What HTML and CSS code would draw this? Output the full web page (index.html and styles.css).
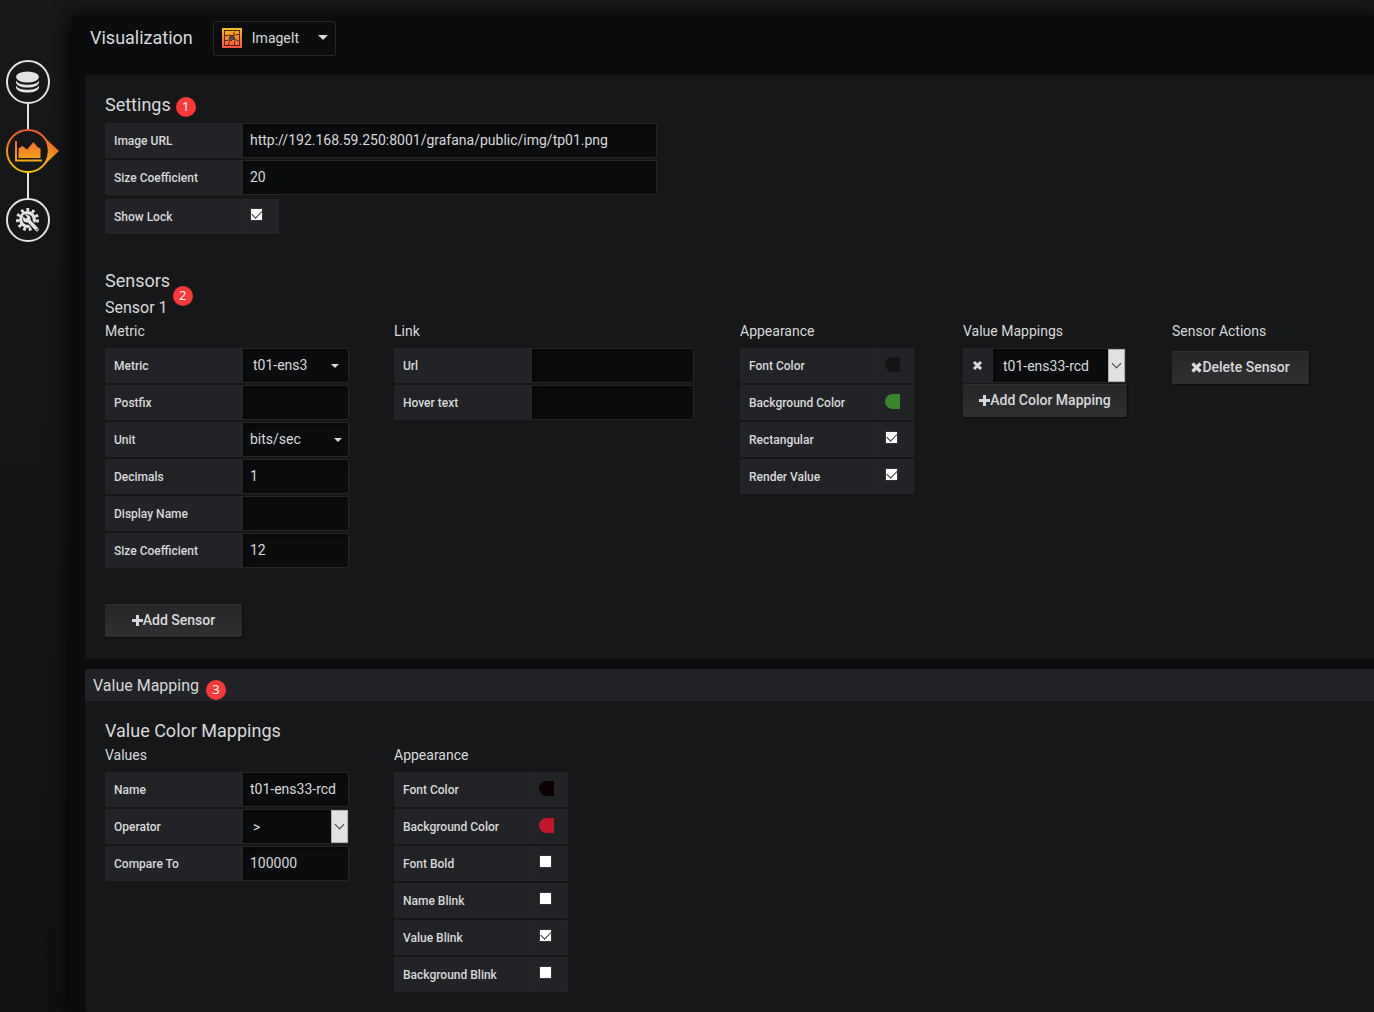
FILE: index.html
```html
<!DOCTYPE html>
<html lang="en">
<head>
    <meta charset="UTF-8">
    <meta name="viewport" content="width=device-width, initial-scale=1.0">
    <title>Visualization</title>
    <link rel="stylesheet" href="styles.css">
</head>
<body>

<nav class="steps">
    <a class="step" href="#queries" aria-label="Queries">
        <svg width="44" height="44" viewBox="0 0 44 44">
            <circle cx="22" cy="22" r="21" fill="none" stroke="#e3e3e3" stroke-width="2"/>
            <g fill="#e3e3e3">
                <ellipse cx="21.500" cy="17" rx="11.500" ry="5.500"/>
                <path d="M10 20.500c1.500 3 6 4.200 11.500 4.200s10-1.200 11.500-4.200v2.200c-1 3.200-5.800 4.800-11.500 4.800s-10.500-1.600-11.500-4.800z"/>
                <path d="M10 25.500c1.500 3 6 4.200 11.500 4.200s10-1.200 11.500-4.200v2.200c-1 3.200-5.800 4.800-11.500 4.800s-10.500-1.600-11.500-4.800z"/>
            </g>
        </svg>
    </a>
    <a class="step active" href="#visualization" aria-label="Visualization">
        <svg width="54" height="44" viewBox="0 0 54 44">
            <defs>
                <linearGradient id="flame" gradientUnits="userSpaceOnUse" x1="0" y1="0" x2="0" y2="44">
                    <stop offset="0" stop-color="#f05a28"/>
                    <stop offset="0.300" stop-color="#f0702a"/>
                    <stop offset="1" stop-color="#fbca0a"/>
                </linearGradient>
            </defs>
            <path d="M37 7L53 22L37 37C43.500 29 43.500 15 37 7z" fill="url(#flame)"/>
            <circle cx="22" cy="22" r="21" fill="none" stroke="url(#flame)" stroke-width="2"/>
            <path d="M9 12h2v18.500h25v2H9z" fill="url(#flame)"/>
            <path d="M12.500 29V19.500l4-2.500l4.500 3.500l6.500-7.500l4 5l3 1.500V29z" fill="url(#flame)"/>
        </svg>
    </a>
    <a class="step" href="#general" aria-label="General">
        <svg width="44" height="44" viewBox="0 0 44 44">
            <circle cx="22" cy="22" r="21" fill="none" stroke="#e3e3e3" stroke-width="2"/>
            <circle cx="21.500" cy="21.500" r="9.800" fill="none" stroke="#e3e3e3" stroke-width="3.400" stroke-dasharray="2.800 2.798"/>
            <circle cx="21.500" cy="21.500" r="6.800" fill="none" stroke="#e3e3e3" stroke-width="3.200"/>
            <path d="M24 24L31 31.500" stroke="#161719" stroke-width="5.600" stroke-linecap="round"/>
            <path d="M21 21L31 31.500" stroke="#e3e3e3" stroke-width="3.600" stroke-linecap="round"/>
            <circle cx="20.800" cy="20.800" r="3.800" fill="#e3e3e3"/>
            <path d="M17.500 17l3 3" stroke="#161719" stroke-width="2.400"/>
            <circle cx="31" cy="31.500" r="0.800" fill="#161719"/>
        </svg>
    </a>
</nav>

<main class="editor">
    <header class="toolbar">
        <h1>Visualization</h1>
        <button class="viz-picker" type="button">
            <svg width="20" height="20" viewBox="0 0 20 20">
                <defs>
                    <linearGradient id="puzzle" x1="0" y1="0" x2="0" y2="1">
                        <stop offset="0" stop-color="#f3bd23"/>
                        <stop offset="1" stop-color="#f4503c"/>
                    </linearGradient>
                </defs>
                <rect width="20" height="20" fill="url(#puzzle)"/>
                <g fill="none" stroke="#5a2713">
                    <rect x="2.500" y="2.500" width="15" height="15"/>
                    <path d="M3 7.500h3l1-1l1 1h4v-3l1-1M12.500 7.500l2-1h3M3 12.500h3l1-1l1 1h2M7.500 12.500v2l-1 1v2M12.500 9v3h2l1 1h2M12.500 13v4M7.500 7.500V10"/>
                </g>
                <path d="M7 8h5v4H7z" fill="#4c4a4d"/>
            </svg>
            <span>ImageIt</span>
            <i class="caret caret-large"></i>
        </button>
    </header>

    <section class="panel">
        <div class="panel-body">
            <h2 class="title"><span class="marked">Settings<b class="badge badge-settings">1</b></span></h2>
            <div class="fields settings">
                <div class="field">
                    <label for="image-url">Image URL</label>
                    <input class="text" id="image-url" type="text" value="http://192.168.59.250:8001/grafana/public/img/tp01.png">
                </div>
                <div class="field">
                    <label for="size">Size Coefficient</label>
                    <input class="text" id="size" type="text" value="20">
                </div>
                <div class="field lock">
                    <label for="lock">Show Lock</label>
                    <div class="cell"><input class="check" id="lock" type="checkbox" checked></div>
                </div>
            </div>

            <h2 class="title">Sensors</h2>
            <h3 class="subtitle"><span class="marked">Sensor 1<b class="badge badge-sensor">2</b></span></h3>
            <div class="columns">
                <div class="col-metric">
                    <h4 class="heading">Metric</h4>
                    <div class="fields">
                        <div class="field">
                            <label for="metric">Metric</label>
                            <div class="select indented">
                                <select id="metric"><option>t01-ens3</option></select>
                                <i class="caret"></i>
                            </div>
                        </div>
                        <div class="field">
                            <label for="postfix">Postfix</label>
                            <input class="text" id="postfix" type="text">
                        </div>
                        <div class="field">
                            <label for="unit">Unit</label>
                            <div class="select">
                                <select id="unit"><option>bits/sec</option></select>
                                <i class="caret"></i>
                            </div>
                        </div>
                        <div class="field">
                            <label for="decimals">Decimals</label>
                            <input class="text" id="decimals" type="text" value="1">
                        </div>
                        <div class="field">
                            <label for="display-name">Display Name</label>
                            <input class="text" id="display-name" type="text">
                        </div>
                        <div class="field">
                            <label for="sensor-size">Size Coefficient</label>
                            <input class="text" id="sensor-size" type="text" value="12">
                        </div>
                    </div>
                </div>

                <div class="col-link">
                    <h4 class="heading">Link</h4>
                    <div class="fields">
                        <div class="field">
                            <label for="url">Url</label>
                            <input class="text" id="url" type="text">
                        </div>
                        <div class="field">
                            <label for="hover">Hover text</label>
                            <input class="text" id="hover" type="text">
                        </div>
                    </div>
                </div>

                <div class="col-appearance">
                    <h4 class="heading">Appearance</h4>
                    <div class="fields">
                        <div class="field">
                            <label for="font-color">Font Color</label>
                            <div class="cell"><input class="swatch" id="font-color" type="color" value="#141414"></div>
                        </div>
                        <div class="field">
                            <label for="bg-color">Background Color</label>
                            <div class="cell"><input class="swatch" id="bg-color" type="color" value="#37872d"></div>
                        </div>
                        <div class="field">
                            <label for="rectangular">Rectangular</label>
                            <div class="cell"><input class="check" id="rectangular" type="checkbox" checked></div>
                        </div>
                        <div class="field">
                            <label for="render-value">Render Value</label>
                            <div class="cell"><input class="check" id="render-value" type="checkbox" checked></div>
                        </div>
                    </div>
                </div>

                <div class="col-mappings">
                    <h4 class="heading">Value Mappings</h4>
                    <div class="field mapping">
                        <button class="remove" type="button" aria-label="Remove mapping">
                            <svg width="11" height="11" viewBox="0 0 11 11"><path d="M2 2l7 7M9 2l-7 7" stroke="currentColor" stroke-width="3"/></svg>
                        </button>
                        <div class="select native">
                            <select aria-label="Value mapping"><option>t01-ens33-rcd</option></select>
                            <i class="arrow"></i>
                        </div>
                    </div>
                    <button class="btn btn-mapping" type="button">
                        <svg width="11" height="11" viewBox="0 0 11 11"><path d="M5.500 0v11M0 5.500h11" stroke="currentColor" stroke-width="3"/></svg>Add Color Mapping
                    </button>
                </div>

                <div class="col-actions">
                    <h4 class="heading">Sensor Actions</h4>
                    <button class="btn btn-delete" type="button">
                        <svg width="11" height="11" viewBox="0 0 11 11"><path d="M1.500 1.500l8 8M9.500 1.500l-8 8" stroke="currentColor" stroke-width="3.200"/></svg>Delete Sensor
                    </button>
                </div>
            </div>

            <button class="btn btn-add" type="button">
                <svg width="11" height="11" viewBox="0 0 11 11"><path d="M5.500 0v11M0 5.500h11" stroke="currentColor" stroke-width="3"/></svg>Add Sensor
            </button>
        </div>
    </section>

    <section class="panel">
        <h2 class="panel-header"><span class="marked">Value Mapping<b class="badge badge-mapping">3</b></span></h2>
        <div class="panel-body">
            <h2 class="title">Value Color Mappings</h2>
            <div class="columns">
                <div class="col-metric">
                    <h4 class="heading">Values</h4>
                    <div class="fields">
                        <div class="field">
                            <label for="name">Name</label>
                            <input class="text" id="name" type="text" value="t01-ens33-rcd">
                        </div>
                        <div class="field">
                            <label for="operator">Operator</label>
                            <div class="select native">
                                <select id="operator"><option>&gt;</option></select>
                                <i class="arrow"></i>
                            </div>
                        </div>
                        <div class="field">
                            <label for="compare">Compare To</label>
                            <input class="text" id="compare" type="text" value="100000">
                        </div>
                    </div>
                </div>

                <div class="col-appearance">
                    <h4 class="heading">Appearance</h4>
                    <div class="fields">
                        <div class="field">
                            <label for="map-font-color">Font Color</label>
                            <div class="cell"><input class="swatch" id="map-font-color" type="color" value="#0d0003"></div>
                        </div>
                        <div class="field">
                            <label for="map-bg-color">Background Color</label>
                            <div class="cell"><input class="swatch" id="map-bg-color" type="color" value="#c4162a"></div>
                        </div>
                        <div class="field">
                            <label for="font-bold">Font Bold</label>
                            <div class="cell"><input class="check" id="font-bold" type="checkbox"></div>
                        </div>
                        <div class="field">
                            <label for="name-blink">Name Blink</label>
                            <div class="cell"><input class="check" id="name-blink" type="checkbox"></div>
                        </div>
                        <div class="field">
                            <label for="value-blink">Value Blink</label>
                            <div class="cell"><input class="check" id="value-blink" type="checkbox" checked></div>
                        </div>
                        <div class="field">
                            <label for="bg-blink">Background Blink</label>
                            <div class="cell"><input class="check" id="bg-blink" type="checkbox"></div>
                        </div>
                    </div>
                </div>
            </div>
        </div>
    </section>
</main>

</body>
</html>
```
FILE: styles.css
```css
* {
    box-sizing: border-box;
}

body {
    margin: 0;
    min-height: 100vh;
    display: flex;
    font-family: Roboto, "Liberation Sans", sans-serif;
    font-size: 14px;
    color: #d8d9da;
    background: linear-gradient(180deg, #17181a, #101113);
}

h1, h2, h3, h4 {
    margin: 0;
    font-weight: 400;
    line-height: 20px;
}

button, input, select {
    font: inherit;
    color: inherit;
    margin: 0;
}

svg {
    display: block;
    flex: none;
}

/* Left step navigation */
.steps {
    width: 70px;
    flex: none;
    padding: 60px 0 0 6px;
}

.step {
    display: block;
}

.step + .step::before {
    content: "";
    display: block;
    width: 2px;
    height: 25px;
    margin-left: 21px;
    background: #e3e3e3;
}

/* Editor */
.editor {
    flex: 1;
    min-width: 0;
    margin-top: 16px;
    padding-left: 15px;
    background: #0b0c0e;
    border-radius: 5px 0 0 0;
    box-shadow: 0 0 20px #000;
}

.toolbar {
    display: flex;
    align-items: center;
    gap: 20px;
    padding: 5px 5px 19px;
}

.toolbar h1 {
    font-size: 18px;
    padding-bottom: 2px;
}

.viz-picker {
    display: flex;
    align-items: center;
    width: 123px;
    height: 35px;
    padding: 0 7px 2px 8px;
    background: #0b0c0e;
    border: 1px solid #262628;
    border-radius: 2px;
}

.viz-picker span {
    margin-left: 10px;
}

.caret {
    border: 4px solid transparent;
    border-top-color: #d8d9da;
    border-bottom: 0;
}

.caret-large {
    margin-left: auto;
    border-width: 5px;
    border-bottom: 0;
}

.panel {
    background: #161719;
    border-radius: 3px 0 0 3px;
}

.panel + .panel {
    margin-top: 10px;
}

.panel-header {
    padding: 7px 8px 5px;
    font-size: 16px;
    background: #222326;
    border-radius: 3px 0 0 0;
}

.panel-body {
    padding: 20px;
}

.title {
    font-size: 18px;
    margin-bottom: 4px;
}

.subtitle {
    font-size: 16px;
    line-height: 26px;
}

.heading {
    font-size: 14px;
    margin-bottom: 7px;
}

/* Numbered markers */
.marked {
    position: relative;
}

.badge {
    position: absolute;
    left: 100%;
    width: 20px;
    height: 20px;
    border-radius: 50%;
    background: #fc3838;
    color: #fff;
    font-family: "Noto Sans", sans-serif;
    font-size: 13px;
    font-weight: 400;
    line-height: 18px;
    text-align: center;
}

.badge-settings {
    top: 3px;
    margin-left: 5px;
}

.badge-sensor {
    top: -12px;
    margin-left: 5px;
}

.badge-mapping {
    top: 4px;
    margin-left: 7px;
}

/* Columns */
.columns {
    display: flex;
    gap: 45px;
}

.col-metric {
    width: 244px;
}

.col-link {
    width: 301px;
    padding-right: 1px;
}

.col-appearance {
    width: 178px;
}

.col-mappings {
    width: 164px;
}

/* Fields */
.fields {
    display: flex;
    flex-direction: column;
    gap: 2px;
}

.settings {
    max-width: 552px;
    margin: 8px 0 37px;
}

.lock {
    margin-top: 2px;
}

.field {
    display: flex;
    height: 35px;
}

.field label {
    flex: none;
    width: 137px;
    padding: 0 8px;
    border: 1px solid #262628;
    border-radius: 2px 0 0 2px;
    background: #222326;
    font-size: 12px;
    font-weight: 500;
    line-height: 35px;
}

.text,
.select {
    flex: 1;
    min-width: 0;
    border: 1px solid #262628;
    border-radius: 0 2px 2px 0;
    background: #0b0c0e;
    box-shadow: inset 2px 2px 4px #060708;
}

.text {
    padding: 0 7px 2px;
}

.select {
    position: relative;
}

.select select {
    appearance: none;
    display: block;
    width: 100%;
    height: 33px;
    padding: 0 7px 2px;
    border: 0;
    background: transparent;
}

.select .caret {
    position: absolute;
    top: 15px;
    right: 6px;
}

.select.indented select {
    padding: 0 10px 2px;
}

.select.indented .caret {
    right: 9px;
}

.select.native select {
    padding: 0 10px;
}

.mapping {
    padding-right: 1px;
}

.arrow {
    position: absolute;
    top: 0;
    right: 0;
    display: grid;
    place-items: center;
    width: 17px;
    height: 33px;
    background: #e1e1e1;
    border: 1px solid #adadad;
    pointer-events: none;
}

.arrow::after {
    content: "";
    width: 6px;
    height: 6px;
    border: solid #404040;
    border-width: 0 1px 1px 0;
    transform: translateY(-2px) rotate(45deg);
}

.cell {
    width: 37px;
    padding: 8px 7px;
    border: 1px solid #262628;
    background: #222326;
}

.swatch {
    appearance: none;
    display: block;
    width: 15px;
    height: 15px;
    padding: 0;
    border: 0;
    border-radius: 8px 0 0 8px;
    background: none;
    overflow: hidden;
}

.swatch::-webkit-color-swatch-wrapper {
    padding: 0;
}

.swatch::-webkit-color-swatch {
    border: 0;
    border-radius: 0;
}

.check {
    appearance: none;
    display: block;
    width: 13px;
    height: 13px;
    border: 1px solid #333;
    background: #fff;
}

.check:checked::after {
    content: "";
    display: block;
    width: 9px;
    height: 5px;
    margin: 1px 0 0 1px;
    border: solid #333;
    border-width: 0 0 1px 1px;
    transform: rotate(-45deg);
}

/* Buttons */
.btn {
    display: flex;
    align-items: center;
    justify-content: center;
    height: 33px;
    padding: 0 16px 2px;
    border: 0;
    border-radius: 2px;
    background: linear-gradient(180deg, #262628, #303032);
    box-shadow: inset 0 1px #303133, 1px 1px 1px #0b0c0e;
    font-weight: 500;
    white-space: nowrap;
}

.btn svg {
    margin-top: 2px;
}

.btn-mapping {
    width: 100%;
    margin-top: 1px;
}

.btn-delete {
    width: 137px;
    margin-top: 10px;
}

.btn-add {
    width: 137px;
    margin: 36px 0 2px;
}

.remove {
    display: grid;
    place-items: center;
    width: 29px;
    padding: 0;
    border: 1px solid #262628;
    border-radius: 2px 0 0 2px;
    background: #222326;
}
```
